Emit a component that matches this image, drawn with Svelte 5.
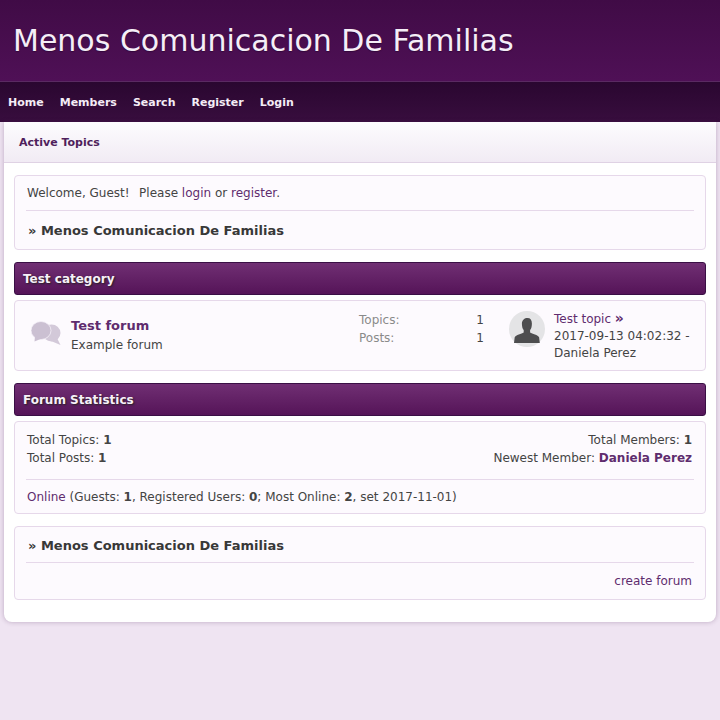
<script>
  const nav = ['Home', 'Members', 'Search', 'Register', 'Login'];
</script>

<div class="page">
  <header class="banner"><h1>Menos Comunicacion De Familias</h1></header>
  <nav class="menu">
    {#each nav as item}
      <a href="#top">{item}</a>
    {/each}
  </nav>
  <main class="wrapper">
    <div class="subnav"><a href="#top">Active Topics</a></div>
    <div class="content">
      <section class="panel welcome">
        <p class="greet"><span class="hello">Welcome, Guest!</span>Please <a href="#top">login</a> or <a href="#top">register</a>.</p>
        <h2 class="crumb">» Menos Comunicacion De Familias</h2>
      </section>

      <h3 class="bar">Test category</h3>
      <section class="panel forum">
        <svg class="bubbles" width="30" height="25" viewBox="0 0 30 25" aria-hidden="true">
          <ellipse cx="20.500" cy="12" rx="9" ry="8.500" fill="#d3c9d9" />
          <path fill="#d3c9d9" d="M20 20l9.500 4-3.500-7z" />
          <ellipse cx="10" cy="9.500" rx="10" ry="9" fill="#cbc0d2" stroke="#f4eff7" stroke-width="0.800" />
          <path fill="#cbc0d2" d="M4 15l-.5 5.500L12 17z" />
        </svg>
        <div class="forum-info">
          <a class="forum-name" href="#top">Test forum</a>
          <div>Example forum</div>
        </div>
        <dl class="counts">
          <dt>Topics:</dt><dd>1</dd>
          <dt>Posts:</dt><dd>1</dd>
        </dl>
        <svg class="avatar" width="36" height="36" viewBox="0 0 36 36" aria-hidden="true">
          <circle cx="18" cy="18" r="18" fill="#e4e4e6" />
          <path fill="#4d4d4f" d="M18.500 7c3 0 4.400 2 4.400 5.500 0 3-.6 5.300-1.800 6.600v2.400c2 1.300 8 2.200 9 4.800l.7 5.700H5l.7-5.700c1-2.600 7-3.500 9-4.800v-2.400c-1.200-1.300-1.800-3.600-1.800-6.600C13.100 9 15.500 7 18.500 7z" />
        </svg>
        <div class="last">
          <a href="#top">Test topic <span class="raquo">»</span></a><br />
          2017-09-13 04:02:32 -<br />
          Daniela Perez
        </div>
      </section>

      <h3 class="bar">Forum Statistics</h3>
      <section class="panel stats">
        <div class="stat-cols">
          <div>
            <div>Total Topics: <b>1</b></div>
            <div>Total Posts: <b>1</b></div>
          </div>
          <div class="right">
            <div>Total Members: <b>1</b></div>
            <div>Newest Member: <a class="strong" href="#top">Daniela Perez</a></div>
          </div>
        </div>
        <p class="online"><a href="#top">Online</a> (Guests: <b>1</b>, Registered Users: <b>0</b>; Most Online: <b>2</b>, set 2017-11-01)</p>
      </section>

      <section class="panel footer-panel">
        <h2 class="crumb top">» Menos Comunicacion De Familias</h2>
        <div class="create"><a href="#top">create forum</a></div>
      </section>
    </div>
  </main>
</div>

<style>
  :global(body) {
    margin: 0;
    background: #efe4f2;
    font-family: "DejaVu Sans", sans-serif;
    font-size: 12px;
    line-height: 18px;
    color: #444;
  }

  a {
    color: #5f2c6e;
    text-decoration: none;
  }

  .page {
    min-height: 720px;
  }

  .banner {
    height: 81px;
    background: linear-gradient(#400b46, #4f1056);
    border-bottom: 1px solid #5a2a62;
    display: flex;
    align-items: center;
    padding-left: 13px;
  }

  h1 {
    margin: 0;
    font-size: 30px;
    line-height: 36px;
    font-weight: 400;
    color: #f5eef7;
    text-shadow: 0 1px 1px rgba(30, 0, 40, 0.5);
  }

  .menu {
    height: 40px;
    box-sizing: border-box;
    padding: 1px 0 0 8px;
    display: flex;
    align-items: center;
    gap: 16px;
    background: linear-gradient(#2a0730, #380d3e);
  }

  .menu a {
    color: #f4ecf6;
    font-size: 11px;
    font-weight: 700;
  }

  .wrapper {
    margin: 0 4px;
    background: #fff;
    border-radius: 0 0 8px 8px;
    box-shadow: 0 0 5px rgba(70, 30, 80, 0.3);
  }

  .subnav {
    height: 41px;
    box-sizing: border-box;
    padding: 1px 0 0 15px;
    display: flex;
    align-items: center;
    background: linear-gradient(#fdfcfe, #f1ebf4);
    border-bottom: 1px solid #dfd2e4;
  }

  .subnav a {
    font-size: 11px;
    font-weight: 700;
    color: #4f1f5c;
  }

  .content {
    padding: 12px 10px 22px;
  }

  .panel {
    background: #fdfafe;
    border: 1px solid #e6d8ea;
    border-radius: 4px;
    margin-bottom: 12px;
  }

  .welcome {
    padding: 8px 11px 0;
    height: 75px;
    box-sizing: border-box;
  }

  .greet {
    margin: 0;
    padding: 0 0 8px 1px;
    border-bottom: 1px solid #e6d8ea;
  }

  .hello {
    margin-right: 9.500px;
  }

  .crumb {
    margin: 0;
    font-size: 13px;
    line-height: 18px;
    font-weight: 700;
    color: #383838;
    padding: 11px 0 0 2px;
  }

  .crumb.top {
    padding: 10px 0 7px 2px;
    border-bottom: 1px solid #e6d8ea;
  }

  .bar {
    margin: 0 0 5px;
    height: 33px;
    box-sizing: border-box;
    padding-left: 8px;
    display: flex;
    align-items: center;
    font-size: 12px;
    font-weight: 700;
    color: #f7f0f8;
    text-shadow: 1px 1px 2px #222;
    background: linear-gradient(#702f73, #551458);
    border: 1px solid #3a0f45;
    border-radius: 3px;
  }

  .forum {
    height: 71px;
    box-sizing: border-box;
    display: flex;
    align-items: flex-start;
  }

  .bubbles {
    margin: 20px 0 0 16px;
    flex: none;
  }

  .forum-info {
    margin: 15px 0 0 10px;
    width: 288px;
    flex: none;
  }

  .forum-name {
    display: block;
    font-size: 13px;
    line-height: 20px;
    font-weight: 700;
  }

  .counts {
    margin: 10px 0 0;
    width: 125px;
    flex: none;
    display: grid;
    grid-template-columns: 1fr auto;
  }

  dt {
    color: #8a8a8a;
  }

  dd {
    margin: 0;
  }

  .avatar {
    margin: 10px 0 0 25px;
    flex: none;
  }

  .last {
    margin: 9px 0 0 9px;
    line-height: 17px;
  }

  .raquo {
    font-size: 14px;
    font-weight: 700;
  }

  .stats {
    padding: 9px 11px 7px;
  }

  .stat-cols {
    display: flex;
    justify-content: space-between;
    padding: 0 2px 12px 1px;
    border-bottom: 1px solid #e6d8ea;
  }

  .right {
    text-align: right;
  }

  .strong {
    font-weight: 700;
  }

  .online {
    margin: 8px 0 0;
    padding-left: 1px;
  }

  .footer-panel {
    padding: 0 11px 9px;
    margin-bottom: 0;
  }

  .create {
    text-align: right;
    padding: 9px 2px 0 0;
  }
</style>
